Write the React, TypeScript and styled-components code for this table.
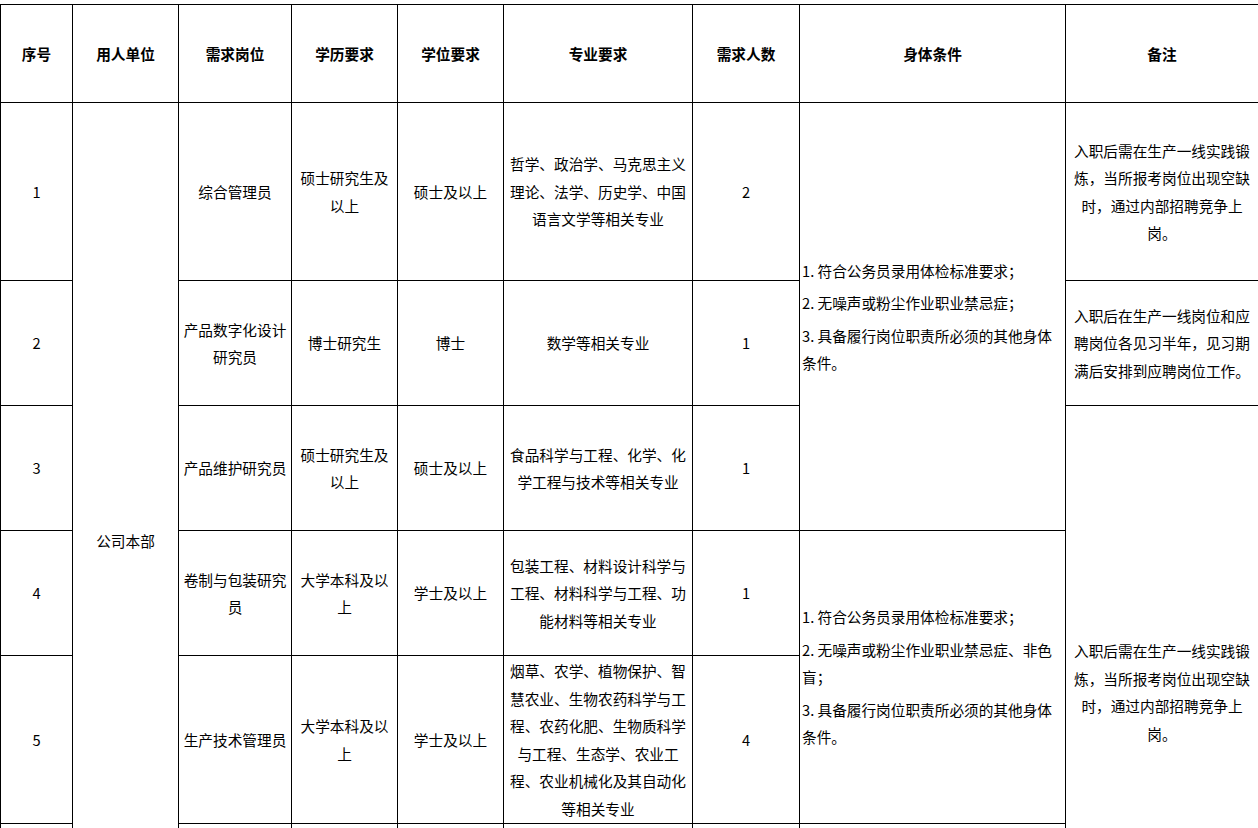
import React from "react";
import styled, { createGlobalStyle } from "styled-components";

const Global = createGlobalStyle`
  html, body { margin: 0; padding: 0; background: #fff; }
  body { font-family: "Noto Sans CJK SC", "Noto Sans", sans-serif; color: #000; }
`;

const Page = styled.div`
  padding-top: 4px;
  width: 1259px;
`;

const Table = styled.table`
  border-collapse: collapse;
  table-layout: fixed;
  width: 1259px;
`;

const HeadCell = styled.th`
  border: 1px solid #000;
  height: 97px;
  padding: 0 4px;
  font-size: 14.67px;
  font-weight: 700;
  text-align: center;
  vertical-align: middle;
`;

const Row = styled.tr<{ $h: number }>`
  height: ${(p) => p.$h}px;
`;

const Cell = styled.td<{ $align?: "left" | "center" }>`
  border: 1px solid #000;
  padding: 0 ${(p) => (p.$align === "left" ? "2px" : "4px")};
  font-size: 14.67px;
  font-weight: 400;
  line-height: 27.5px;
  text-align: ${(p) => p.$align ?? "center"};
  vertical-align: middle;
`;

const Line = styled.div`
  white-space: nowrap;
`;

const Para = styled.div`
  & + & {
    margin-top: 5px;
  }
`;

const widths = [72, 106, 113, 106, 106, 189, 107, 266, 193];

const headers = ["序号", "用人单位", "需求岗位", "学历要求", "学位要求", "专业要求", "需求人数", "身体条件", "备注"];

const Lines: React.FC<{ lines: string[] }> = ({ lines }) => (
  <>
    {lines.map((l, i) => (
      <Line key={i}>{l}</Line>
    ))}
  </>
);

const Paras: React.FC<{ paras: string[][] }> = ({ paras }) => (
  <>
    {paras.map((p, i) => (
      <Para key={i}>
        <Lines lines={p} />
      </Para>
    ))}
  </>
);

const remarkA = ["入职后需在生产一线实践锻", "炼，当所报考岗位出现空缺", "时，通过内部招聘竞争上", "岗。"];
const remarkB = ["入职后在生产一线岗位和应", "聘岗位各见习半年，见习期", "满后安排到应聘岗位工作。"];

const bodyA = [
  ["1. 符合公务员录用体检标准要求；"],
  ["2. 无噪声或粉尘作业职业禁忌症；"],
  ["3. 具备履行岗位职责所必须的其他身体", "条件。"],
];
const bodyB = [
  ["1. 符合公务员录用体检标准要求；"],
  ["2. 无噪声或粉尘作业职业禁忌症、非色", "盲；"],
  ["3. 具备履行岗位职责所必须的其他身体", "条件。"],
];

export default function App() {
  return (
    <Page>
      <Global />
      <Table>
        <colgroup>
          {widths.map((w, i) => (
            <col key={i} style={{ width: w }} />
          ))}
        </colgroup>
        <thead>
          <tr>
            {headers.map((h) => (
              <HeadCell key={h}>{h}</HeadCell>
            ))}
          </tr>
        </thead>
        <tbody>
          <Row $h={178}>
            <Cell>1</Cell>
            <Cell rowSpan={6}>公司本部</Cell>
            <Cell>综合管理员</Cell>
            <Cell><Lines lines={["硕士研究生及", "以上"]} /></Cell>
            <Cell>硕士及以上</Cell>
            <Cell><Lines lines={["哲学、政治学、马克思主义", "理论、法学、历史学、中国", "语言文学等相关专业"]} /></Cell>
            <Cell>2</Cell>
            <Cell rowSpan={3} $align="left"><Paras paras={bodyA} /></Cell>
            <Cell><Lines lines={remarkA} /></Cell>
          </Row>
          <Row $h={125}>
            <Cell>2</Cell>
            <Cell><Lines lines={["产品数字化设计", "研究员"]} /></Cell>
            <Cell>博士研究生</Cell>
            <Cell>博士</Cell>
            <Cell>数学等相关专业</Cell>
            <Cell>1</Cell>
            <Cell><Lines lines={remarkB} /></Cell>
          </Row>
          <Row $h={125}>
            <Cell>3</Cell>
            <Cell>产品维护研究员</Cell>
            <Cell><Lines lines={["硕士研究生及", "以上"]} /></Cell>
            <Cell>硕士及以上</Cell>
            <Cell><Lines lines={["食品科学与工程、化学、化", "学工程与技术等相关专业"]} /></Cell>
            <Cell>1</Cell>
            <Cell rowSpan={4}><Lines lines={remarkA} /></Cell>
          </Row>
          <Row $h={125}>
            <Cell>4</Cell>
            <Cell><Lines lines={["卷制与包装研究", "员"]} /></Cell>
            <Cell><Lines lines={["大学本科及以", "上"]} /></Cell>
            <Cell>学士及以上</Cell>
            <Cell><Lines lines={["包装工程、材料设计科学与", "工程、材料科学与工程、功", "能材料等相关专业"]} /></Cell>
            <Cell>1</Cell>
            <Cell rowSpan={2} $align="left"><Paras paras={bodyB} /></Cell>
          </Row>
          <Row $h={168}>
            <Cell>5</Cell>
            <Cell>生产技术管理员</Cell>
            <Cell><Lines lines={["大学本科及以", "上"]} /></Cell>
            <Cell>学士及以上</Cell>
            <Cell>
              <Lines
                lines={[
                  "烟草、农学、植物保护、智",
                  "慧农业、生物农药科学与工",
                  "程、农药化肥、生物质科学",
                  "与工程、生态学、农业工",
                  "程、农业机械化及其自动化",
                  "等相关专业",
                ]}
              />
            </Cell>
            <Cell>4</Cell>
          </Row>
          <Row $h={155}>
            <Cell></Cell>
            <Cell></Cell>
            <Cell></Cell>
            <Cell></Cell>
            <Cell></Cell>
            <Cell></Cell>
            <Cell></Cell>
          </Row>
        </tbody>
      </Table>
    </Page>
  );
}
